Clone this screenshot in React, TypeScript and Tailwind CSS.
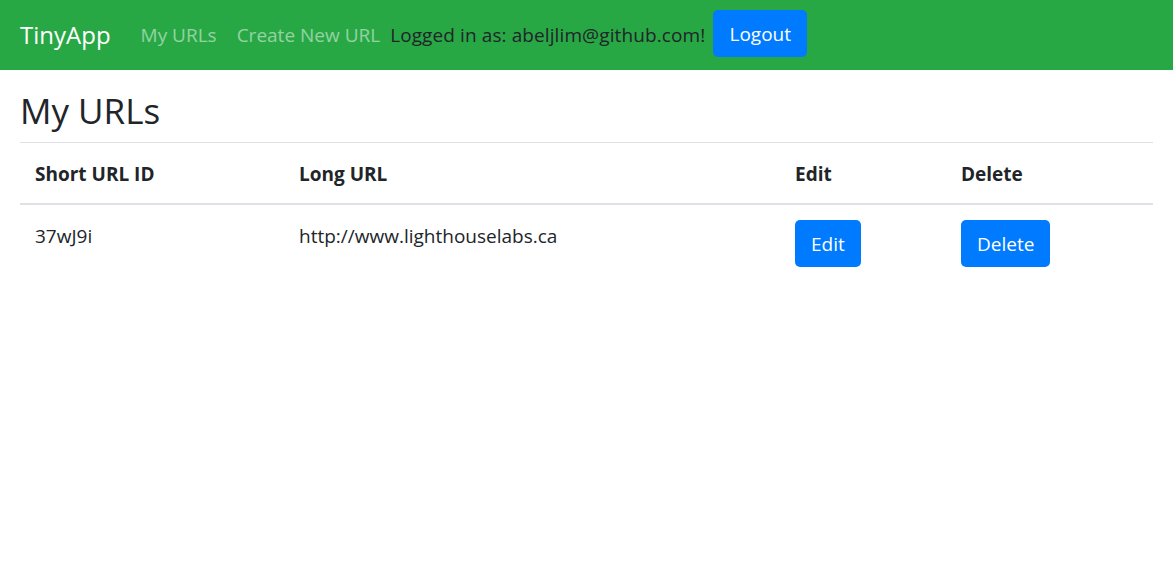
import React from "react";

interface UrlRow {
  id: string;
  longUrl: string;
}

const urls: UrlRow[] = [{ id: "37wJ9i", longUrl: "http://www.lighthouselabs.ca" }];

function BlueButton({ children, className = "" }: { children: React.ReactNode; className?: string }) {
  return (
    <button
      className={`h-[47px] rounded-[5px] bg-[#007bff] px-4 pt-[2px] text-[19px] leading-none text-white ${className}`}
    >
      {children}
    </button>
  );
}

export default function App() {
  return (
    <div className="min-h-[588px] bg-white text-[#212529] font-['Open_Sans',sans-serif]">
      <nav className="flex h-[70px] items-center bg-[#28a745] pl-5">
        <span className="mr-[30px] text-[24px] text-white">TinyApp</span>
        <a className="mr-5 text-[19px] text-white/50">My URLs</a>
        <a className="mr-[10px] text-[19px] text-white/50">Create New URL</a>
        <span className="text-[19px] tracking-[0.1px] text-[#212529]">Logged in as: abeljlim@github.com!</span>
        <BlueButton className="mb-[3px] ml-[8px] w-[94px] px-0">Logout</BlueButton>
      </nav>

      <main className="px-5">
        <h2 className="pt-[18px] pb-[8px] text-[35px] font-medium leading-[46px]">My URLs</h2>
        <table className="w-full border-collapse text-left text-[19px]">
          <colgroup>
            <col className="w-[264px]" />
            <col className="w-[496px]" />
            <col className="w-[166px]" />
            <col />
          </colgroup>
          <thead>
            <tr className="border-t border-b-2 border-t-[#dee2e6] border-b-[#dee2e6]">
              <th className="h-[61px] px-[15px] pt-[2px] align-middle font-bold">Short URL ID</th>
              <th className="px-[15px] pt-[2px] align-middle font-bold">Long URL</th>
              <th className="px-[15px] pt-[2px] align-middle font-bold">Edit</th>
              <th className="px-[15px] pt-[2px] align-middle font-bold">Delete</th>
            </tr>
          </thead>
          <tbody>
            {urls.map((url) => (
              <tr key={url.id}>
                <td className="px-[15px] pt-[15px] pb-4 align-top leading-[32px]">{url.id}</td>
                <td className="px-[15px] pt-[15px] pb-4 align-top leading-[32px]">{url.longUrl}</td>
                <td className="px-[15px] pt-[15px] pb-4 align-top">
                  <BlueButton>Edit</BlueButton>
                </td>
                <td className="px-[15px] pt-[15px] pb-4 align-top">
                  <BlueButton>Delete</BlueButton>
                </td>
              </tr>
            ))}
          </tbody>
        </table>
      </main>
    </div>
  );
}
